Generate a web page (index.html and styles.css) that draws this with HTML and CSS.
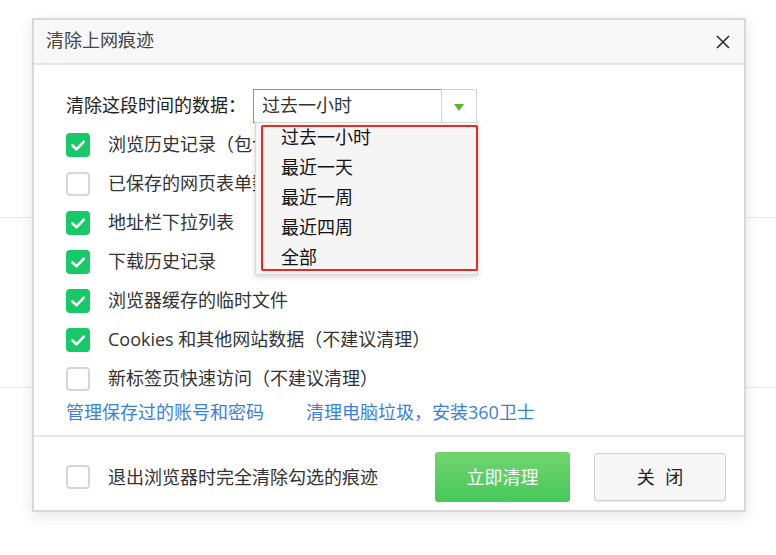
FILE: index.html
```html
<!DOCTYPE html>
<html lang="zh-CN">
<head>
<meta charset="utf-8">
<title>清除上网痕迹</title>
<link rel="stylesheet" href="styles.css">
</head>
<body>
<div class="backdrop">
  <div class="band band-top"></div>
  <div class="band band-mid"></div>
</div>

<div class="dialog">
  <div class="titlebar">
    <span class="title">清除上网痕迹</span>
    <span class="close-x">
      <svg width="14" height="14" viewBox="0 0 14 14"><path d="M1 1 L13 13 M13 1 L1 13" stroke="#2b2b2b" stroke-width="1.6" fill="none"/></svg>
    </span>
  </div>

  <div class="body">
    <div class="range-row">
      <span class="range-label">清除这段时间的数据：</span>
      <div class="select">
        <span class="select-value">过去一小时</span>
        <span class="select-arrow">
          <svg width="10" height="7" viewBox="0 0 10 7"><path d="M0 0 H10 L5 7 Z" fill="#58b92a"/></svg>
        </span>
        <div class="dropdown">
          <div class="dd-item">过去一小时</div>
          <div class="dd-item">最近一天</div>
          <div class="dd-item">最近一周</div>
          <div class="dd-item">最近四周</div>
          <div class="dd-item">全部</div>
          <div class="annot"></div>
        </div>
      </div>
    </div>

    <div class="options">
      <div class="opt"><span class="cb on"><svg width="24" height="24" viewBox="0 0 24 24"><path d="M6.5 12.5 L10.5 16.3 L17.8 8.6" stroke="#fff" stroke-width="2.6" fill="none" stroke-linecap="round" stroke-linejoin="round"/></svg></span><span class="opt-label">浏览历史记录（包含已打开的网址）</span></div>
      <div class="opt"><span class="cb"></span><span class="opt-label">已保存的网页表单数据</span></div>
      <div class="opt"><span class="cb on"><svg width="24" height="24" viewBox="0 0 24 24"><path d="M6.5 12.5 L10.5 16.3 L17.8 8.6" stroke="#fff" stroke-width="2.6" fill="none" stroke-linecap="round" stroke-linejoin="round"/></svg></span><span class="opt-label">地址栏下拉列表</span></div>
      <div class="opt"><span class="cb on"><svg width="24" height="24" viewBox="0 0 24 24"><path d="M6.5 12.5 L10.5 16.3 L17.8 8.6" stroke="#fff" stroke-width="2.6" fill="none" stroke-linecap="round" stroke-linejoin="round"/></svg></span><span class="opt-label">下载历史记录</span></div>
      <div class="opt"><span class="cb on"><svg width="24" height="24" viewBox="0 0 24 24"><path d="M6.5 12.5 L10.5 16.3 L17.8 8.6" stroke="#fff" stroke-width="2.6" fill="none" stroke-linecap="round" stroke-linejoin="round"/></svg></span><span class="opt-label">浏览器缓存的临时文件</span></div>
      <div class="opt"><span class="cb on"><svg width="24" height="24" viewBox="0 0 24 24"><path d="M6.5 12.5 L10.5 16.3 L17.8 8.6" stroke="#fff" stroke-width="2.6" fill="none" stroke-linecap="round" stroke-linejoin="round"/></svg></span><span class="opt-label">Cookies 和其他网站数据（不建议清理）</span></div>
      <div class="opt"><span class="cb"></span><span class="opt-label">新标签页快速访问（不建议清理）</span></div>
    </div>

    <div class="links">
      <a class="link link-first">管理保存过的账号和密码</a>
      <a class="link">清理电脑垃圾，安装360卫士</a>
    </div>
  </div>

  <div class="footer">
    <span class="cb"></span>
    <span class="footer-label">退出浏览器时完全清除勾选的痕迹</span>
    <span class="spacer"></span>
    <button class="btn btn-primary">立即清理</button>
    <button class="btn btn-default">关 闭</button>
  </div>
</div>
</body>
</html>
```

FILE: styles.css
```css
* { box-sizing: border-box; }

html, body {
  margin: 0;
  padding: 0;
  width: 776px;
  height: 555px;
  overflow: hidden;
  background: #ffffff;
  font-family: "Open Sans", "Noto Sans CJK SC", sans-serif;
}

.backdrop {
  width: 776px;
  height: 555px;
}

.band {
  border-bottom: 1px solid #ececec;
}

.band-top { height: 218px; }
.band-mid { height: 170px; }

.dialog {
  position: absolute;
  left: 32px;
  top: 18px;
  width: 714px;
  height: 494px;
  border: 2px solid #d8d8d8;
  background: #ffffff;
  box-shadow: 0 4px 14px rgba(0, 0, 0, 0.10);
  display: flex;
  flex-direction: column;
}

.titlebar {
  height: 45px;
  background: #f8f8f8;
  border-bottom: 2px solid #e4e4e4;
  display: flex;
  align-items: center;
  padding: 0 13px 0 12px;
}

.title {
  flex: 1;
  font-size: 18px;
  color: #444;
  line-height: 1;
  padding-bottom: 3px;
}

.close-x {
  width: 16px;
  height: 16px;
  display: flex;
  align-items: center;
  justify-content: center;
  margin-top: 1px;
}

.body {
  padding: 24px 0 9px 32px;
  display: flex;
  flex-direction: column;
}

.range-row {
  display: flex;
  align-items: center;
  height: 34px;
}

.range-label {
  width: 187px;
  font-size: 18px;
  color: #222;
  line-height: 1;
  padding-bottom: 2px;
}

.select {
  position: relative;
  width: 224px;
  height: 34px;
  display: flex;
}

.select-value {
  flex: 1;
  border-top: 1px solid #62bd34;
  border-left: 1px solid #62bd34;
  border-bottom: 1px solid #62bd34;
  font-size: 18px;
  color: #333;
  display: flex;
  align-items: center;
  padding-left: 8px;
  padding-bottom: 2px;
  line-height: 1;
}

.select-arrow {
  width: 36px;
  border: 1px solid #d4d4d4;
  display: flex;
  align-items: center;
  justify-content: center;
  padding-top: 3px;
}

.dropdown {
  position: absolute;
  left: 2px;
  top: 33px;
  width: 223px;
  height: 153px;
  background: #f5f5f5;
  border: 1px solid #dadada;
  box-shadow: 0 2px 5px rgba(0, 0, 0, 0.16);
  z-index: 5;
}

.dd-item {
  height: 30px;
  display: flex;
  align-items: center;
  padding-left: 25px;
  padding-bottom: 2px;
  font-size: 18px;
  color: #111;
  line-height: 1;
}

.annot {
  position: absolute;
  left: 5px;
  top: 2px;
  width: 217px;
  height: 146px;
  border: 2px solid #e62a22;
  border-radius: 2px;
}

.options {
  margin-top: 2px;
  display: flex;
  flex-direction: column;
}

.opt {
  height: 39px;
  display: flex;
  align-items: center;
  gap: 18px;
}

.cb {
  width: 24px;
  height: 24px;
  flex: 0 0 24px;
  border: 2px solid #d6d6d6;
  border-radius: 4px;
  background: #fff;
  display: flex;
  align-items: center;
  justify-content: center;
}

.cb.on {
  background: #17c967;
  border: none;
}

.opt-label {
  font-size: 18px;
  color: #333;
  line-height: 1;
  white-space: nowrap;
  padding-bottom: 1px;
}

.links {
  height: 28px;
  display: flex;
  align-items: center;
}

.link {
  font-size: 18px;
  color: #3b7fdc;
  line-height: 1;
  white-space: nowrap;
  padding-bottom: 1px;
}

.link-first {
  width: 240px;
}

.footer {
  flex: 1;
  border-top: 2px solid #e8e8e8;
  display: flex;
  align-items: center;
  padding: 14px 18px 8px 32px;
}

.footer-label {
  margin-left: 18px;
  font-size: 18px;
  color: #333;
  line-height: 1;
  white-space: nowrap;
}

.spacer { flex: 1; }

.btn {
  font-family: "Open Sans", "Noto Sans CJK SC", sans-serif;
  font-size: 18px;
  line-height: 1;
  border-radius: 3px;
  padding: 0;
  cursor: pointer;
}

.btn-primary {
  width: 135px;
  height: 50px;
  border: none;
  color: #fff;
  background: linear-gradient(#72d46f, #45c85a);
  margin-right: 24px;
}

.btn-default {
  width: 132px;
  height: 48px;
  border: 1px solid #cdcdcd;
  background: #f6f6f6;
  color: #222;
  word-spacing: 6px;
  box-shadow: 0 1px 1px rgba(0, 0, 0, 0.08);
}
```
